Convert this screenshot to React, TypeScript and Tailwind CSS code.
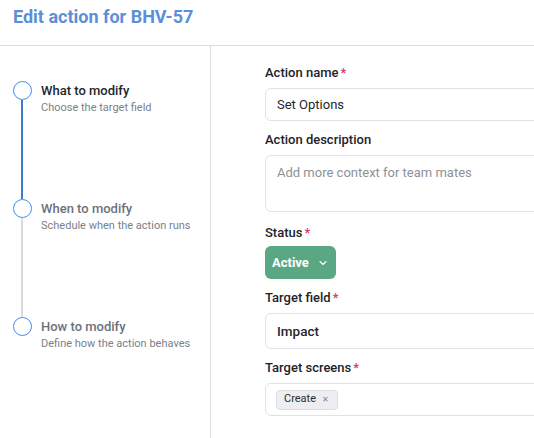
import React from "react";

const Req = () => <span className="ml-[2px] text-[#d93a64]">*</span>;

function Step({
  title,
  subtitle,
  active,
  line,
}: {
  title: string;
  subtitle: string;
  active?: boolean;
  line?: "blue" | "gray";
}) {
  return (
    <div className="flex h-[118px]">
      <div className="flex w-[20px] flex-col items-center">
        <div className="h-[19px] w-[19px] shrink-0 rounded-full border-[1.5px] border-[#4a8ce0] bg-white" />
        {line && (
          <div
            className={
              line === "blue"
                ? "w-[1.5px] flex-1 bg-[#3d7ccb]"
                : "w-[1.5px] flex-1 bg-[#d6d9de]"
            }
          />
        )}
      </div>
      <div className="ml-[9px] pt-[1px]">
        <div
          className={
            active
              ? "text-[13px] font-medium leading-[18px] text-[#23262b]"
              : "text-[13px] font-medium leading-[18px] text-[#6d717b]"
          }
        >
          {title}
        </div>
        <div className="text-[11px] leading-[16px] text-[#7b808a]">{subtitle}</div>
      </div>
    </div>
  );
}

function Label({ children }: { children: React.ReactNode }) {
  return (
    <div className="text-[13px] font-medium leading-[20px] text-[#1f2226]">{children}</div>
  );
}

export default function App() {
  return (
    <div
      className="h-[438px] w-[534px] overflow-hidden bg-white"
      style={{ fontFamily: "Roboto, 'Liberation Sans', sans-serif" }}
    >
      <div className="flex h-[46px] items-start border-b border-[#dcdde0] px-[13px] pt-[5px]">
        <h1 className="text-[18px] font-bold leading-[24px] text-[#5b8fd8]">Edit action for BHV-57</h1>
      </div>
      <div className="flex h-[392px]">
        <div className="w-[211px] shrink-0 border-r border-[#dcdde0] pl-[12px] pt-[35px]">
          <Step title="What to modify" subtitle="Choose the target field" active line="blue" />
          <Step title="When to modify" subtitle="Schedule when the action runs" line="gray" />
          <Step title="How to modify" subtitle="Define how the action behaves" />
        </div>
        <div className="min-w-0 flex-1 overflow-hidden pl-[54px] pt-[17px]">
          <div className="w-[320px]">
            <Label>
              Action name
              <Req />
            </Label>
            <div className="mt-[5px] flex h-[33px] items-center rounded-[6px] border border-[#dfe1e4] px-[11px] text-[13px] text-[#25282c]">
              Set Options
            </div>

            <div className="mt-[9px]">
              <Label>Action description</Label>
            </div>
            <div className="mt-[5px] h-[57px] rounded-[6px] border border-[#dfe1e4] px-[11px] pt-[9px] text-[13px] leading-[16px] text-[#8d9199]">
              Add more context for team mates
            </div>

            <div className="mt-[11px]">
              <Label>
                Status
                <Req />
              </Label>
            </div>
            <button className="mt-[3px] flex h-[33px] w-[71px] items-center rounded-[6px] bg-[#59a883] pl-[7px] text-[13px] font-bold text-white">
              Active
              <svg className="ml-[9px]" width="10" height="10" viewBox="0 0 10 10" fill="none">
                <path d="M2 3.5 L5 6.5 L8 3.5" stroke="white" strokeWidth="1.1" strokeLinecap="round" strokeLinejoin="round" />
              </svg>
            </button>

            <div className="mt-[9px]">
              <Label>
                Target field
                <Req />
              </Label>
            </div>
            <div className="mt-[5px] flex h-[36px] items-center rounded-[6px] border border-[#dfe1e4] px-[11px] text-[13.5px] font-medium text-[#25282c]">
              Impact
            </div>

            <div className="mt-[9px]">
              <Label>
                Target screens
                <Req />
              </Label>
            </div>
            <div className="mt-[5px] flex h-[33px] items-center rounded-[6px] border border-[#dfe1e4] px-[10px]">
              <span className="flex h-[20px] items-center rounded-[4px] border border-[#dcdee2] bg-[#eceef1] pl-[7px] pr-[8px] text-[11px] text-[#2a2d31]">
                Create
                <span className="ml-[6px] text-[8px] text-[#7d828b]">✕</span>
              </span>
            </div>
          </div>
        </div>
      </div>
    </div>
  );
}
